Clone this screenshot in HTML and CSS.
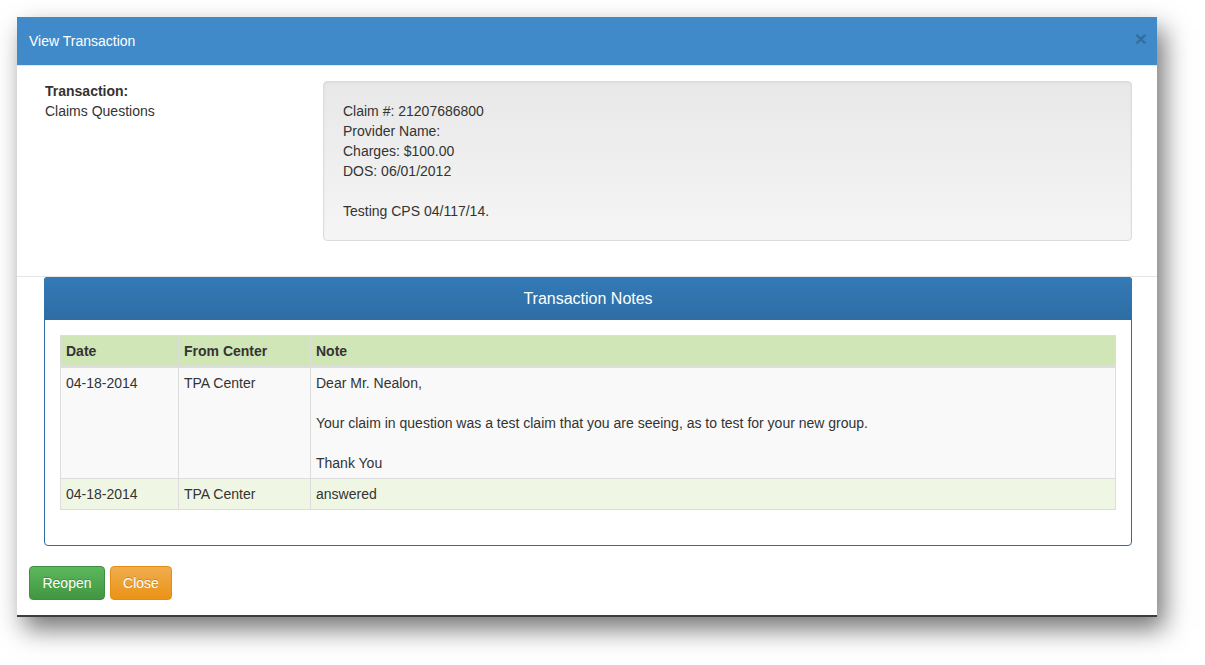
FILE: index.html
```html
<!DOCTYPE html>
<html lang="en">
<head>
    <meta charset="UTF-8">
    <title>View Transaction</title>
    <link rel="stylesheet" href="styles.css">
</head>
<body>
<div class="modal">
    <div class="modal-header">
        <h4 class="modal-title">View Transaction</h4>
        <span class="close">&times;</span>
    </div>

    <div class="modal-body">
        <div class="info">
            <b>Transaction:</b><br>
            Claims Questions
        </div>
        <div class="well">
            Claim #: 21207686800<br>
            Provider Name:<br>
            Charges: $100.00<br>
            DOS: 06/01/2012<br>
            <br>
            Testing CPS 04/117/14.
        </div>
    </div>

    <div class="notes">
        <div class="panel">
            <div class="panel-heading">Transaction Notes</div>
            <div class="panel-body">
                <table class="notes-table">
                    <thead>
                        <tr>
                            <th class="col-date">Date</th>
                            <th class="col-center">From Center</th>
                            <th>Note</th>
                        </tr>
                    </thead>
                    <tbody>
                        <tr class="striped">
                            <td>04-18-2014</td>
                            <td>TPA Center</td>
                            <td>Dear Mr. Nealon,<br><br>Your claim in question was a test claim that you are seeing, as to test for your new group.<br><br>Thank You</td>
                        </tr>
                        <tr class="success">
                            <td>04-18-2014</td>
                            <td>TPA Center</td>
                            <td>answered</td>
                        </tr>
                    </tbody>
                </table>
            </div>
        </div>
    </div>

    <div class="modal-footer">
        <button class="btn btn-success">Reopen</button>
        <button class="btn btn-warning">Close</button>
    </div>
</div>
</body>
</html>
```

FILE: styles.css
```css
body {
    margin: 0;
    padding: 17px 0 0 17px;
    min-height: 100vh;
    box-sizing: border-box;
    background: #fff;
    font-family: "Liberation Sans", Arial, Helvetica, sans-serif;
    font-size: 14px;
    line-height: 20px;
    color: #333;
}

.modal {
    width: 1140px;
    background: #fff;
    border-bottom: 2px solid #3c3c3c;
    box-shadow: 7px 12px 24px rgba(0, 0, 0, 0.55);
}

.modal-header {
    height: 49px;
    display: flex;
    align-items: center;
    justify-content: space-between;
    padding: 0 10px 0 12px;
    background: #418ac9;
    border-bottom: 1px solid #e5e5e5;
    box-sizing: border-box;
}

.modal-title {
    margin: 0;
    font-size: 14px;
    font-weight: normal;
    color: #fff;
}

.close {
    font-size: 21px;
    font-weight: bold;
    color: #000;
    opacity: 0.2;
    line-height: 1;
    margin-top: -5px;
}

.modal-body {
    display: flex;
    padding: 15px 25px 35px 28px;
}

.info {
    width: 278px;
}

.well {
    flex: 1;
    padding: 19px;
    background: linear-gradient(to bottom, #e8e8e8, #f5f5f5);
    border: 1px solid #dcdcdc;
    border-radius: 4px;
    box-shadow: inset 0 1px 3px rgba(0, 0, 0, 0.05), 0 1px 0 rgba(255, 255, 255, 0.1);
}

.notes {
    border-top: 1px solid #e5e5e5;
    padding: 0 25px 0 27px;
}

.panel {
    border: 1px solid #2e6da4;
    border-radius: 4px;
}

.panel-heading {
    height: 42px;
    line-height: 42px;
    text-align: center;
    font-size: 16px;
    color: #fff;
    background: linear-gradient(to bottom, #337ab7, #2e6da4);
    border-radius: 3px 3px 0 0;
    margin: -1px -1px 0;
    padding-top: 1px;
}

.panel-body {
    padding: 15px;
}

.notes-table {
    width: 100%;
    border-collapse: collapse;
    margin-bottom: 20px;
}

.notes-table th,
.notes-table td {
    border: 1px solid #ddd;
    padding: 5px;
    text-align: left;
    vertical-align: top;
}

.notes-table thead tr {
    background: #d0e6b6;
}

.notes-table thead th {
    border-bottom-width: 2px;
}

.col-date {
    width: 107px;
}

.col-center {
    width: 121px;
}

.striped {
    background: #f9f9f9;
}

.success {
    background: #eff7e4;
}

.modal-footer {
    display: flex;
    gap: 5px;
    padding: 20px 12px 15px;
}

.btn {
    font-family: inherit;
    font-size: 14px;
    line-height: 20px;
    padding: 6px 12px;
    border-radius: 4px;
    color: #fff;
    text-shadow: 0 -1px 0 rgba(0, 0, 0, 0.2);
    cursor: pointer;
}

.btn-success {
    width: 76px;
    background: linear-gradient(to bottom, #5cb85c, #419641);
    border: 1px solid #3e8f3e;
}

.btn-warning {
    width: 62px;
    background: linear-gradient(to bottom, #f0ad4e, #eb9316);
    border: 1px solid #e38d13;
}
```
